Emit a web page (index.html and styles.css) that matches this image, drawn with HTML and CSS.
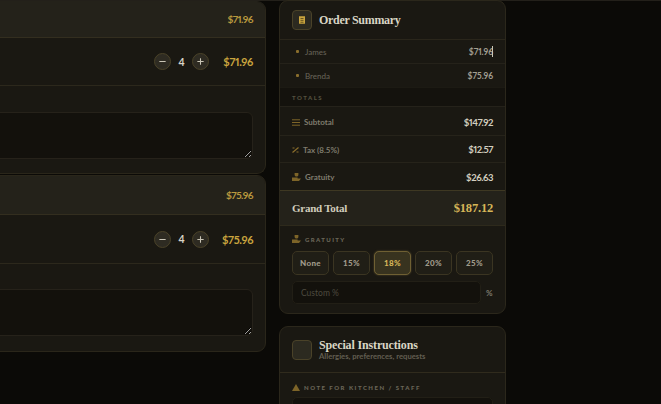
FILE: index.html
```html
<!DOCTYPE html>
<html lang="en">
<head>
<meta charset="utf-8">
<title>Order Summary</title>
<link rel="stylesheet" href="styles.css">
</head>
<body>
<div class="topline"></div>
<main class="layout">
  <section class="guests">
    <article class="guest first">
      <header class="guest-head"><span class="head-price">$71.96</span></header>
      <div class="item">
        <button class="qty" aria-label="Decrease"><svg viewBox="0 0 10 10"><path d="M1.5 5h7"/></svg></button>
        <span class="count">4</span>
        <button class="qty" aria-label="Increase"><svg viewBox="0 0 10 10"><path d="M1.5 5h7M5 1.5v7"/></svg></button>
        <span class="item-price">$71.96</span>
      </div>
      <div class="notes"><textarea class="note-box" aria-label="Notes"></textarea></div>
    </article>
    <article class="guest second">
      <header class="guest-head"><span class="head-price">$75.96</span></header>
      <div class="item">
        <button class="qty" aria-label="Decrease"><svg viewBox="0 0 10 10"><path d="M1.5 5h7"/></svg></button>
        <span class="count">4</span>
        <button class="qty" aria-label="Increase"><svg viewBox="0 0 10 10"><path d="M1.5 5h7M5 1.5v7"/></svg></button>
        <span class="item-price">$75.96</span>
      </div>
      <div class="notes"><textarea class="note-box" aria-label="Notes"></textarea></div>
    </article>
  </section>

  <aside class="side">
    <section class="panel summary">
      <header class="panel-head">
        <span class="icon-box"><svg viewBox="0 0 8 10"><path fill="#c9a43e" d="M0 0h8v10H0z"/><path stroke="#4a3c18" stroke-width="1" d="M2 3h4M2 5.5h4M2 8h4"/></svg></span>
        <h2 class="panel-title">Order Summary</h2>
      </header>
      <div class="person"><span class="person-name"><i class="dot"></i>James</span><span class="person-amt caret-wrap">$71.96<i class="caret"></i></span></div>
      <div class="person last"><span class="person-name"><i class="dot"></i>Brenda</span><span class="person-amt">$75.96</span></div>
      <div class="totals-label">TOTALS</div>
      <div class="line subtotal"><span class="line-name"><svg class="line-icon" viewBox="0 0 8 7"><path d="M0 .8h8M0 3.5h8M0 6.2h8"/></svg>Subtotal</span><span class="line-amt">$147.92</span></div>
      <div class="line tax"><span class="line-name tight"><svg class="line-icon small" viewBox="0 0 7 6"><path d="M.5 5.5 6.5.5M.5 1h2M4.500 5h2"/></svg>Tax (8.5%)</span><span class="line-amt">$12.57</span></div>
      <div class="line grat"><span class="line-name"><svg class="line-icon solid" viewBox="0 0 9 8"><path d="M2.6 0h3.8v2.2L5.4 3.6H3.6L2.6 2.2zM0 4.6h5.6v.9H9L7 8H0z"/></svg>Gratuity</span><span class="line-amt">$26.63</span></div>
      <div class="grand"><span class="grand-name">Grand Total</span><span class="grand-amt">$187.12</span></div>
      <div class="tip">
        <div class="field-label"><svg class="line-icon solid" viewBox="0 0 9 8"><path d="M2.6 0h3.8v2.2L5.4 3.6H3.6L2.6 2.2zM0 4.6h5.6v.9H9L7 8H0z"/></svg>GRATUITY</div>
        <div class="tip-row">
          <button class="tip-btn">None</button>
          <button class="tip-btn">15%</button>
          <button class="tip-btn active">18%</button>
          <button class="tip-btn">20%</button>
          <button class="tip-btn">25%</button>
        </div>
        <div class="custom-row">
          <input class="custom" placeholder="Custom %" aria-label="Custom gratuity">
          <span class="pct">%</span>
        </div>
      </div>
    </section>
    <section class="panel special">
      <header class="panel-head tall">
        <span class="icon-box"></span>
        <div>
          <h2 class="panel-title big">Special Instructions</h2>
          <p class="panel-sub">Allergies, preferences, requests</p>
        </div>
      </header>
      <div class="special-body">
        <div class="field-label wide"><svg class="line-icon solid tri" viewBox="0 0 8 7"><path d="M4 0l4 7H0z"/></svg>NOTE FOR KITCHEN / STAFF</div>
        <div class="kitchen"></div>
      </div>
    </section>
  </aside>
</main>
</body>
</html>
```
FILE: styles.css
```css
* { box-sizing: border-box; }
html, body { margin: 0; height: 404px; overflow: hidden; }
body {
  background: #0b0a07;
  font-family: Lato, "Liberation Sans", sans-serif;
  color: #d8d4c6;
}
.topline { height: 1px; background: #23201a; }
.layout {
  display: grid;
  grid-template-columns: 266px 227px;
  column-gap: 13px;
  align-items: start;
}
.guests { display: flex; flex-direction: column; gap: 1px; }
.guest {
  margin-left: -20px;
  background: #1a1812;
  border: 1px solid #2a261a;
  border-radius: 9px;
  overflow: hidden;
}
.guest.first { height: 173px; border-top-color: #24221a; }
.guest.second { height: 177px; }
.guest-head {
  display: flex;
  justify-content: flex-end;
  align-items: center;
  padding-right: 12px;
  background: #24221a;
  border-bottom: 1px solid #332e1f;
}
.first .guest-head { height: 36px; padding-bottom: 2px; }
.second .guest-head { height: 39px; }
.head-price {
  font-size: 10px;
  font-weight: 700;
  letter-spacing: -.55px;
  font-variant-numeric: proportional-nums;
  color: #b8983e;
}
.item {
  display: flex;
  align-items: center;
  justify-content: flex-end;
  padding-right: 12px;
  border-bottom: 1px solid #2c281c;
}
.first .item { height: 48px; }
.second .item { height: 49px; }
.qty {
  width: 17px;
  height: 17px;
  padding: 0;
  display: flex;
  align-items: center;
  justify-content: center;
  background: #2e2b22;
  border: 1px solid #4a4228;
  border-radius: 50%;
}
.qty svg { width: 9px; height: 9px; fill: none; stroke: #c9c5b6; stroke-width: 1.2; }
.count { width: 21px; text-align: center; font-size: 10.5px; font-weight: 700; color: #d8d4c6; }
.item-price {
  width: 31px;
  margin-left: 13px;
  font-size: 11px;
  font-weight: 700;
  letter-spacing: -.35px;
  font-variant-numeric: proportional-nums;
  text-align: right;
  color: #c9a43e;
  white-space: nowrap;
}
.first .notes { padding: 26px 12px 0 0; }
.second .notes { padding: 25px 12px 0 0; }
.note-box {
  display: block;
  width: 100%;
  height: 47px;
  margin: 0;
  background: #13110c;
  border: 1px solid #26221a;
  border-radius: 6px;
  outline: none;
  color: #d8d4c6;
}
.side { display: flex; flex-direction: column; gap: 12px; margin-top: -1px; }
.panel {
  background: #1a1812;
  border: 1px solid #2b271b;
  border-radius: 9px;
  overflow: hidden;
}
.panel-head {
  display: flex;
  align-items: center;
  gap: 7px;
  height: 39px;
  padding-left: 12px;
  border-bottom: 1px solid #2a261b;
}
.panel-head.tall { height: 46px; border-bottom-color: #302b1d; }
.icon-box {
  width: 20px;
  height: 20px;
  flex: none;
  display: flex;
  align-items: center;
  justify-content: center;
  background: #2c2a20;
  border: 1px solid #4a4228;
  border-radius: 4px;
}
.icon-box svg { width: 6px; height: 8px; }
.panel-title {
  margin: 0;
  font-family: "Liberation Serif", serif;
  font-size: 12px;
  font-weight: 700;
  letter-spacing: -.3px;
  color: #d9d5c4;
  line-height: 14px;
}
.summary .panel-title { margin-top: -1px; }
.panel-title.big { letter-spacing: -.15px; }
.panel-sub { margin: 0; font-size: 7.7px; font-weight: 700; color: #625e51; line-height: 9px; }
.person {
  display: flex;
  justify-content: space-between;
  align-items: center;
  height: 24px;
  padding: 0 12px 0 16px;
  border-bottom: 1px solid #25221a;
}
.person.last { height: 23px; border-bottom: 0; }
.person-name { display: flex; align-items: center; gap: 6px; font-size: 8px; color: #6a665a; }
.dot { width: 3px; height: 3px; border-radius: 1px; background: #8a6e2c; }
.person-amt {
  font-size: 8.5px;
  font-weight: 700;
  letter-spacing: -.05px;
  font-variant-numeric: proportional-nums;
  color: #a29e90;
}
.caret-wrap { position: relative; }
.caret { position: absolute; right: 0; top: -1px; width: 1px; height: 11px; background: #c9c5b6; }
.totals-label {
  height: 20px;
  display: flex;
  align-items: center;
  padding-left: 12px;
  background: #14120d;
  border-top: 1px solid #1c1a13;
  border-bottom: 1px solid #25221a;
  font-size: 6px;
  font-weight: 900;
  letter-spacing: 1.5px;
  color: #54513f;
}
.line {
  display: flex;
  justify-content: space-between;
  align-items: center;
  padding: 1px 12px 0;
  border-bottom: 1px solid #26231a;
}
.subtotal { height: 29px; padding-top: 2px; }
.tax { height: 27px; }
.grat { height: 27px; border-bottom: 0; }
.line-name { display: flex; align-items: center; gap: 4px; font-size: 8px; font-weight: 700; color: #7f7b6d; }
.line-name.tight { gap: 4px; }
.line-icon { width: 8px; height: 7px; flex: none; fill: none; stroke: #7d6428; stroke-width: 1; }
.line-icon.small { width: 7px; height: 6px; stroke: #8a6e2c; stroke-width: 1.2; }
.line-icon.solid { fill: #7d6428; stroke: none; width: 9px; height: 8px; }
.line-icon.tri { width: 8px; height: 7px; }
.line-amt {
  font-size: 9.5px;
  font-weight: 700;
  letter-spacing: -.45px;
  font-variant-numeric: proportional-nums;
  color: #d2cebf;
}
.grand {
  display: flex;
  justify-content: space-between;
  align-items: center;
  height: 35px;
  padding: 0 12px;
  background: #24221a;
  border-top: 1px solid #3e3822;
}
.grand-name { font-family: "Liberation Serif", serif; font-size: 11px; font-weight: 700; letter-spacing: -.25px; color: #d0ccbb; }
.grand-amt { font-family: "Liberation Serif", serif; font-size: 12.5px; font-weight: 700; letter-spacing: -.2px; color: #d6b658; }
.tip { padding: 7px 12px 9px; border-top: 1px solid #2e2a1c; }
.field-label {
  display: flex;
  align-items: center;
  gap: 4px;
  height: 12px;
  font-size: 6px;
  font-weight: 900;
  letter-spacing: 1.4px;
  color: #6a6658;
}
.tip-row { display: flex; gap: 4px; margin-top: 6px; }
.tip-btn {
  width: 37px;
  height: 24px;
  padding: 0;
  background: #201e16;
  border: 1px solid #3b3522;
  border-radius: 5px;
  font-family: Lato, "Liberation Sans", sans-serif;
  font-size: 8px;
  font-weight: 900;
  letter-spacing: .4px;
  color: #a09c8c;
}
.tip-btn.active {
  background: #38331f;
  border-color: #6f6033;
  color: #d6b658;
  box-shadow: 0 0 2px #5e5230;
}
.custom-row { display: flex; align-items: center; gap: 5px; margin-top: 6px; }
.custom {
  width: 189px;
  height: 23px;
  padding: 0 8px;
  background: #13110c;
  border: 1px solid #221f16;
  border-radius: 5px;
  font-family: Lato, "Liberation Sans", sans-serif;
  font-size: 8.5px;
  outline: none;
}
.custom::placeholder { color: #4d4a3f; }
.pct { font-size: 8px; font-weight: 700; color: #7f7b6d; }
.special-body { padding: 8px 12px 0; }
.field-label.wide { letter-spacing: 1.5px; }
.kitchen { height: 20px; margin-top: 4px; background: #13110c; border: 1px solid #221f16; border-radius: 5px; }
```
